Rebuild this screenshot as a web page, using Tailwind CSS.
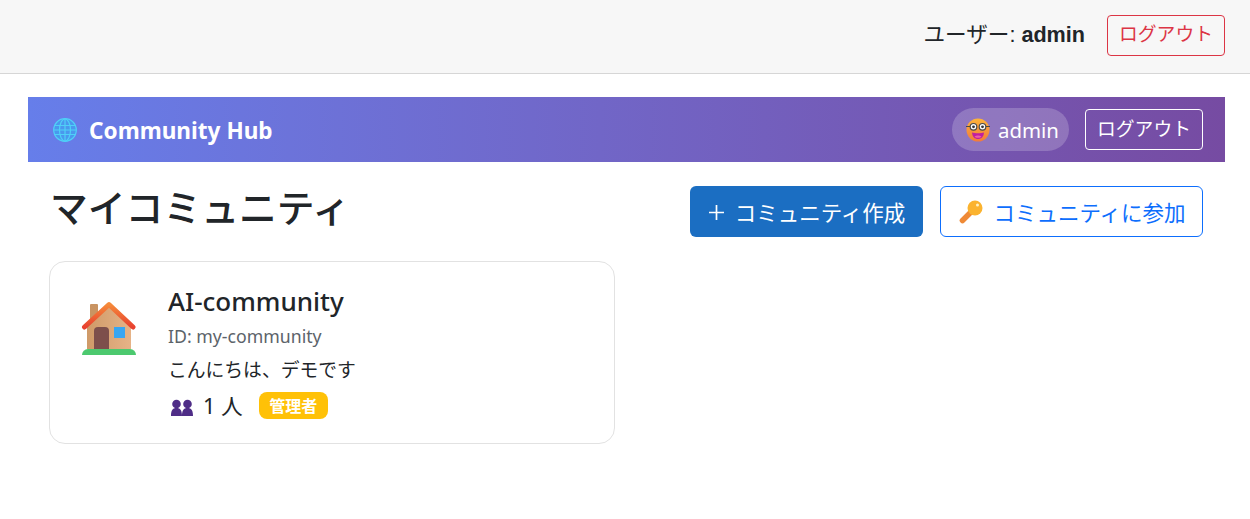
<html lang="ja">
<head>
<meta charset="UTF-8">
<title>Community Hub</title>
<script src="https://cdn.jsdelivr.net/npm/@tailwindcss/browser@4"></script>
</head>
<body class="bg-white text-[#212529] font-['Liberation_Sans','Noto_Sans_CJK_JP',sans-serif]">
  <!-- Top Bar -->
  <div class="h-[74px] bg-[#f7f7f7] border-b border-[#d6d6d6] pr-[25px] pb-[2px] flex items-center justify-end">
    <span class="text-[21.6px] mr-[22px]">ユーザー: <b>admin</b></span>
    <button class="h-[41px] w-[118px] border border-[#dc3545] rounded text-[#dc3545] text-[18.8px]">ログアウト</button>
  </div>

  <div class="pr-[25px] pt-[23px] pl-[28px]">
    <!-- Hub header -->
    <div class="h-[65px] bg-gradient-to-r from-[#667eea] to-[#764ba2] pl-[25px] pr-[22px] flex items-center justify-between text-white font-['Noto_Sans','Noto_Sans_CJK_JP',sans-serif]">
      <div class="flex items-center gap-[12px]">
        <svg class="w-[24px] h-[24px]" viewBox="0 0 24 24" fill="none" stroke="#4fd0f7" stroke-width="1.2">
          <circle cx="12" cy="12" r="11.300" fill="#4a98ee"/>
          <ellipse cx="12" cy="12" rx="5.500" ry="11"/>
          <path d="M12 1v22M1.500 7.500h21M.8 12h22.400M1.500 16.500h21"/>
        </svg>
        <h1 class="text-[22.6px] font-bold leading-[30px] mt-[3px]">Community Hub</h1>
      </div>
      <div class="flex items-center gap-[16px]">
        <div class="h-[43px] w-[117px] rounded-full bg-white/20 flex items-center pl-[14px] gap-[9px] text-[20.4px]">
          <svg class="w-[24px] h-[24px]" viewBox="0 0 24 24">
            <defs>
              <linearGradient id="face" x1="0" y1="0" x2="0" y2="1">
                <stop offset="0" stop-color="#fcb43a"/>
                <stop offset="1" stop-color="#f27a3c"/>
              </linearGradient>
            </defs>
            <circle cx="12" cy="12" r="11.500" fill="url(#face)"/>
            <path d="M6 14.500c3 1 9 1 12 0-.3 4.500-3 6.500-6 6.500s-5.700-2-6-6.500z" fill="#c01fa0"/>
            <path d="M8.500 18.500c2-1.200 5-1.200 7 0-1 1.700-6 1.700-7 0z" fill="#ef5da8"/>
            <circle cx="7.500" cy="8.800" r="3.300" fill="#fff" stroke="#4a4a4a" stroke-width="1.200"/>
            <circle cx="16.500" cy="8.800" r="3.300" fill="#fff" stroke="#4a4a4a" stroke-width="1.200"/>
            <circle cx="7.500" cy="8.800" r="1.400" fill="#333"/>
            <circle cx="16.500" cy="8.800" r="1.400" fill="#333"/>
            <path d="M0 8.500h4M20 8.500h4" stroke="#4a4a4a" stroke-width="1.200"/>
          </svg>
          <span class="mt-[2px] -ml-[1px]">admin</span>
        </div>
        <button class="h-[41px] w-[118px] border border-white rounded text-[18.8px]">ログアウト</button>
      </div>
    </div>

    <div class="font-['Noto_Sans','Noto_Sans_CJK_JP',sans-serif]">
      <!-- Title row -->
      <div class="flex items-center justify-between pl-[22px] pr-[22px] pt-[24px]">
        <h2 class="text-[37.8px] leading-[46px] font-medium -mt-[7px]">マイコミュニティ</h2>
        <div class="flex gap-[17px]">
          <button class="h-[51px] w-[233px] bg-[#1b6ec2] rounded-md text-white text-[21.5px] flex items-center justify-center gap-[10px]">
            <svg class="w-[17px] h-[17px] mt-[2px]" viewBox="0 0 17 17" stroke="#fff" stroke-width="1.700"><path d="M8.500 1v15M1 8.500h15"/></svg>
            <span class="mt-[4px]">コミュニティ作成</span>
          </button>
          <button class="h-[51px] w-[263px] border border-[#0d6efd] rounded-md text-[#0d6efd] text-[21.5px] flex items-center justify-center gap-[10px]">
            <svg class="w-[24px] h-[24px] mt-[1px] ml-[2px]" viewBox="0 0 24 24">
              <path d="M14 10L3.500 20.500" stroke="#ef8a36" stroke-width="5.500" stroke-linecap="round"/>
              <circle cx="16" cy="8" r="7.500" fill="#fbb32f"/>
              <circle cx="18.500" cy="5" r="1.500" fill="#fff3c4"/>
            </svg>
            <span class="mt-[4px]">コミュニティに参加</span>
          </button>
        </div>
      </div>

      <!-- Community card -->
      <div class="ml-[21px] mt-[24px] w-[566px] h-[183px] border border-[#e2e2e2] rounded-2xl pl-[31px] pt-[20px] flex gap-[32px]">
        <svg class="w-[55px] h-[54px] mt-[19px] shrink-0" viewBox="0 0 55 54">
          <defs>
            <linearGradient id="wall" x1="0" y1="0" x2="1" y2="0">
              <stop offset="0" stop-color="#cf9a68"/>
              <stop offset="1" stop-color="#e6b387"/>
            </linearGradient>
            <linearGradient id="roof" x1="0" y1="1" x2="0" y2="0">
              <stop offset="0" stop-color="#e8412f"/>
              <stop offset="1" stop-color="#f58a3a"/>
            </linearGradient>
          </defs>
          <rect x="9" y="3" width="8" height="20" rx="1" fill="#c99462"/>
          <path d="M6 25L28 5l22 20v23H6z" fill="url(#wall)"/>
          <path d="M3.500 26L28 3.500 52 26" fill="none" stroke="url(#roof)" stroke-width="5" stroke-linecap="round" stroke-linejoin="round"/>
          <path d="M13 48V30a4 4 0 0 1 4-4h7a4 4 0 0 1 4 4v18z" fill="#7d4f4b"/>
          <rect x="33" y="26" width="11" height="11" fill="#38a6f2"/>
          <path d="M1 54a6 6 0 0 1 6-6h42a6 6 0 0 1 6 6z" fill="#4cc96f"/>
        </svg>
        <div>
          <h3 class="text-[26px] leading-[38px] font-medium">AI-community</h3>
          <p class="text-[17.7px] leading-[24px] mt-[4px] text-[#5c636a]">ID: my-community</p>
          <p class="text-[18.8px] leading-[24px] mt-[10px]">こんにちは、デモです</p>
          <div class="flex items-center mt-[7px]">
            <svg class="w-[22px] h-[17px] ml-[3px] mt-[4px]" viewBox="0 0 22 17" fill="#4f2d87">
              <circle cx="5.500" cy="5" r="4.300"/>
              <circle cx="16.500" cy="5" r="4.300"/>
              <path d="M0 17c0-5.500 1.500-8 5.500-8s5.500 2.500 5.500 8zM11 17c0-5.500 1.500-8 5.500-8s5.500 2.500 5.500 8z"/>
            </svg>
            <span class="text-[21.7px] ml-[10px] mt-[1px]">1 人</span>
            <span class="ml-[16px] h-[27px] w-[69px] rounded-lg bg-[#ffc107] text-white text-[16px] font-bold flex items-center justify-center">管理者</span>
          </div>
        </div>
      </div>
    </div>
  </div>
</body>
</html>
